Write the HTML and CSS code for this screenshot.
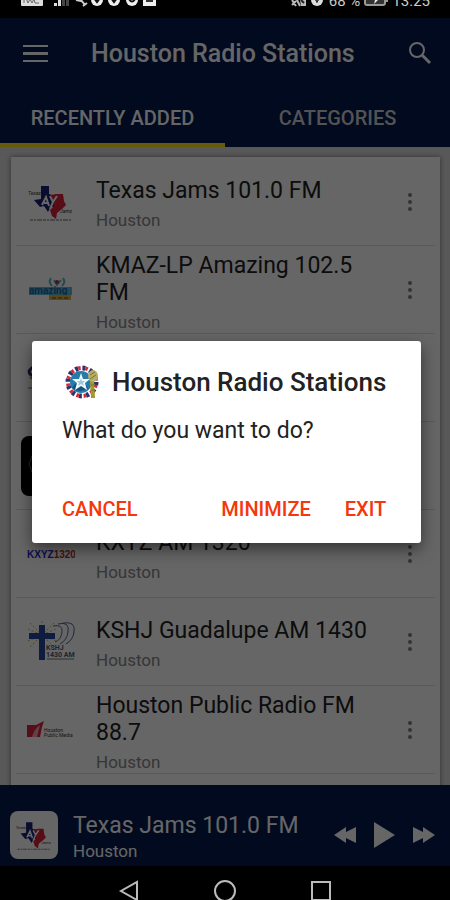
FILE: index.html
```html
<!DOCTYPE html>
<html lang="en">
<head>
<meta charset="utf-8">
<meta name="viewport" content="width=device-width, initial-scale=1">
<title>Houston Radio Stations</title>
<link rel="stylesheet" href="styles.css">
</head>
<body>
<svg class="defs" aria-hidden="true">
  <symbol id="texas" viewBox="0 0 48 48">
    <path d="M14 8h8v8l6 2v12l-4-2-3 6-4-6-4 1-6-7 7-1z" fill="#1b1f78"/>
    <path d="M24 17l5-1 7 0 1 7 2 4-4 4-5 4-1 6-4-3-2-6 4-4z" fill="#dc1f35"/>
    <path d="M15 27l4-8 3 9M17 25h5M23 18l3 6 4-6M26 24l-3 7" fill="none" stroke="#fff" stroke-width="2"/>
    <text x="1" y="17" class="tiny-logo">Texas</text>
    <text x="33" y="35" class="tiny-logo">Jams</text>
    <path d="M3 42h41" stroke="#666" stroke-width="1" stroke-dasharray="3 1 2 1 5 1"/>
  </symbol>
  <symbol id="more" viewBox="0 0 6 20">
    <circle cx="3" cy="3" r="2"/><circle cx="3" cy="10" r="2"/><circle cx="3" cy="17" r="2"/>
  </symbol>
</svg>

<div class="status">
  <div class="status-group">
    <svg width="136" height="16" viewBox="0 0 136 16">
      <path d="M0 0h22v14q0 1-1 1H1q-1 0-1-1z" fill="#ddd"/>
      <path d="M3 12V9l2-2 2 5 2-4 2 4 2-4 1 4h4" fill="none" stroke="#666" stroke-width="1"/>
      <path d="M33 12h3v3h-3zM37 8h3v7h-3z" fill="#ddd"/><path d="M41 4h3v11h-3zM45 0h3v15h-3z" fill="#444"/>
      <path d="M56 4l8 10M55 9l5 1M62 15l4-3" stroke="#ccc" stroke-width="2" fill="none"/>
      <circle cx="76" cy="9" r="6" fill="#eee"/><path d="M73 7l3 4 3-4" stroke="#111" stroke-width="2" fill="none"/>
      <circle cx="93" cy="9" r="6" fill="#eee"/><path d="M90 7l3 4 3-4" stroke="#111" stroke-width="2" fill="none"/>
      <circle cx="111" cy="9" r="6" fill="#eee"/><path d="M108 8q3 5 6 0" stroke="#111" stroke-width="2" fill="none"/>
      <path d="M122 2h13v13h-13z" fill="#eee"/><path d="M125 8h7v3h-7z" fill="#333"/>
    </svg>
  </div>
  <div class="status-group">
    <svg width="34" height="16" viewBox="0 0 34 16">
      <path d="M1 9l4 6M5 7l4 8M1 14l4-4" stroke="#bbb" stroke-width="2"/><path d="M8 3h7v12h-5z" fill="#bbb"/><path d="M10 9l3 3" stroke="#222" stroke-width="2"/>
      <circle cx="26" cy="9" r="6" fill="#ddd"/><path d="M24 8q2 5 4 0" stroke="#111" fill="none"/><path d="M26 6v6" stroke="#111"/>
    </svg>
    <span>68 %</span>
    <svg width="24" height="16" viewBox="0 0 24 16">
      <rect x="1" y="3" width="20" height="11" rx="2" fill="#333" stroke="#999" stroke-width="2"/><path d="M22 6h2v5h-2z" fill="#999"/><path d="M12 4l-5 5h4l-1 4 5-5h-4z" fill="#eee"/>
    </svg>
    <span>13.25</span>
  </div>
</div>

<div class="app">
  <header class="header">
    <div class="toolbar">
      <button class="icon-button" aria-label="Menu"><svg width="25" height="19" viewBox="0 0 25 19"><path d="M0 1h25v2H0zM0 8h25v3H0zM0 16h25v2H0z" fill="#fff"/></svg></button>
      <h1>Houston Radio Stations</h1>
      <button class="icon-button" aria-label="Search"><svg width="24" height="24" viewBox="0 0 24 24"><circle cx="9" cy="9" r="7" fill="none" stroke="#fff" stroke-width="2"/><path d="M14 14l8 8" stroke="#fff" stroke-width="3"/></svg></button>
    </div>
    <nav class="tabs">
      <a class="tab active" href="#recent">RECENTLY ADDED</a>
      <a class="tab" href="#categories">CATEGORIES</a>
    </nav>
  </header>

  <main class="content" id="recent">
    <ul class="card">
      <li class="station">
        <svg class="logo"><use href="#texas"/></svg>
        <div class="info"><h2>Texas Jams 101.0 FM</h2><p>Houston</p></div>
        <button class="more" aria-label="Options"><svg><use href="#more"/></svg></button>
      </li>
      <li class="station">
        <svg class="logo" viewBox="0 0 48 48">
          <path d="M24 12q-3 4 1 8M36 12q3 4-1 8M27 14l3 5 4-5" fill="none" stroke="#58b5cc" stroke-width="2"/><circle cx="30" cy="16" r="2" fill="#a3363c"/>
          <path d="M2 21h43v8H2z" fill="#5bb7dd"/>
          <text x="2" y="28" class="amazing">amazing</text>
          <path d="M22 29h22v5H22z" fill="#e3b030"/><path d="M25 32h16" stroke="#59451c" stroke-dasharray="4 2"/>
        </svg>
        <div class="info"><h2>KMAZ-LP Amazing 102.5 FM</h2><p>Houston</p></div>
        <button class="more" aria-label="Options"><svg><use href="#more"/></svg></button>
      </li>
      <li class="station">
        <svg class="logo" viewBox="0 0 48 48"><path d="M8 12q-8 4-5 8l5 3" fill="none" stroke="#243063" stroke-width="3"/><path d="M3 23l5 2" stroke="#a0a43c" stroke-width="3"/><path d="M1 34h20" stroke="#666"/></svg>
      </li>
      <li class="station">
        <svg class="logo large" viewBox="0 0 60 60"><rect width="60" height="60" rx="8"/><path d="M12 18l-4 10 4 10" fill="none" stroke="#666"/></svg>
      </li>
      <li class="station">
        <svg class="logo" viewBox="0 0 48 48"><text x="0" y="28" class="kxyz"><tspan fill="#2525c8">KXYZ</tspan><tspan fill="#a83232">1320</tspan></text></svg>
        <div class="info"><h2>KXYZ AM 1320</h2><p>Houston</p></div>
        <button class="more" aria-label="Options"><svg><use href="#more"/></svg></button>
      </li>
      <li class="station">
        <svg class="logo" viewBox="0 0 48 48">
          <path d="M3 5l24 24M27 5L3 29M15 3v28M1 11l28 12M1 23l28-12" stroke="#bab75c" stroke-dasharray="2 2"/>
          <path d="M12 7h6v35h-6zM2 15h26v6H2z" fill="#244a9e"/>
          <path d="M26 8q10-2 9 6-1 8-7 10M31 6q12-3 10 8-1 8-8 12M36 5q13-2 11 9-1 8-8 12" fill="none" stroke="#4f6797" stroke-width="1"/>
          <text x="19" y="32" class="kshj">KSHJ</text><text x="19" y="39" class="kshj">1430 AM</text><path d="M20 41h27" stroke="#777"/>
        </svg>
        <div class="info"><h2>KSHJ Guadalupe AM 1430</h2><p>Houston</p></div>
        <button class="more" aria-label="Options"><svg><use href="#more"/></svg></button>
      </li>
      <li class="station">
        <svg class="logo" viewBox="0 0 48 48"><path d="M0 19h9l8-4-2 6-2 10H0z" fill="#d82444"/><path d="M5 31q2-8 8-12l-3 12" fill="#f4a0ac"/><text x="17" y="26" class="public">Houston</text><text x="17" y="31" class="public">Public Media</text></svg>
        <div class="info"><h2>Houston Public Radio FM 88.7</h2><p>Houston</p></div>
        <button class="more" aria-label="Options"><svg><use href="#more"/></svg></button>
      </li>
      <li class="station"></li>
    </ul>
  </main>

  <footer class="player">
    <svg class="thumb"><use href="#texas"/></svg>
    <div class="playing"><h2>Texas Jams 101.0 FM</h2><p>Houston</p></div>
    <div class="controls">
      <button aria-label="Previous"><svg width="22" height="18" viewBox="0 0 22 18"><path d="M0 9l12-8v5l10-5v16l-10-5v5z"/></svg></button>
      <button aria-label="Play"><svg width="21" height="26" viewBox="0 0 21 26"><path d="M0 0l21 13L0 26z"/></svg></button>
      <button aria-label="Next"><svg width="22" height="18" viewBox="0 0 22 18"><path d="M22 9L10 1v5L0 1v16l10-5v5z"/></svg></button>
    </div>
  </footer>

  <div class="scrim">
    <section class="dialog" role="dialog" aria-modal="true" aria-labelledby="dialog-title">
      <div class="dialog-head">
        <svg width="34" height="34" viewBox="0 0 34 34">
          <circle cx="17" cy="17" r="14" fill="none" stroke="#27356e" stroke-width="5" stroke-dasharray="3 4.33"/>
          <circle cx="17" cy="17" r="14" fill="none" stroke="#dc2638" stroke-width="4" stroke-dasharray="2.5 4.83" stroke-dashoffset="-3"/>
          <circle cx="16" cy="17" r="11" fill="#267ba8"/><path d="M7 23q8 6 16 0l-3-4H10z" fill="#14517c"/>
          <path d="M16 8l2 6h7l-5 4 2 7-6-4-6 4 2-7-5-4h7z" fill="#f4fafc"/>
          <path d="M16 13l1 3h3l-2 2 1 3-3-2-3 2 1-3-2-2h3z" fill="#9cc9dd"/>
          <path d="M25 15h4l1 18h-4z" fill="#a49b2e"/><ellipse cx="28" cy="11" rx="5" ry="6" fill="#b7ad67"/><path d="M25 10l5-3M25 14l6-4M26 20h4M26 25h4" stroke="#777242"/>
        </svg>
        <h2 id="dialog-title">Houston Radio Stations</h2>
      </div>
      <p class="message">What do you want to do?</p>
      <div class="actions">
        <button class="cancel">CANCEL</button>
        <button>MINIMIZE</button>
        <button>EXIT</button>
      </div>
    </section>
  </div>
</div>

<nav class="system-nav" aria-label="System">
  <button aria-label="Back"><svg width="22" height="22" viewBox="0 0 22 22"><path d="M19 2v18L3 11z"/></svg></button>
  <button aria-label="Home"><svg width="22" height="22" viewBox="0 0 22 22"><circle cx="11" cy="11" r="10"/></svg></button>
  <button aria-label="Recent apps"><svg width="22" height="22" viewBox="0 0 22 22"><path d="M2 2h18v18H2z"/></svg></button>
</nav>
</body>
</html>
```
FILE: styles.css
```css
* { box-sizing: border-box; }
body {
  margin: 0;
  height: 100vh;
  display: flex;
  flex-direction: column;
  overflow: hidden;
  background: #000;
  font-family: Roboto, "Liberation Sans", sans-serif;
}
h1, h2, p, ul { margin: 0; padding: 0; font-weight: 400; }
button { border: 0; padding: 0; background: none; color: inherit; font: inherit; }
svg { display: block; flex: none; }
.defs { position: absolute; width: 0; height: 0; }

.status {
  flex: none;
  height: 18px;
  padding: 0 20px 11px 21px;
  display: flex;
  justify-content: space-between;
  align-items: flex-end;
  overflow: hidden;
  color: #ccc;
  font-size: 15px;
  line-height: 12px;
}
.status-group { display: flex; align-items: flex-end; gap: 4px; }

.app { position: relative; flex: 1; min-height: 0; display: flex; flex-direction: column; }
.header { flex: none; background: #03194e; color: #fff; }
.toolbar { display: flex; align-items: center; height: 70px; padding: 0 18px 0 23px; }
.toolbar h1 { flex: 1; padding: 2px 0 0 43px; font-size: 25px; font-weight: 500; line-height: 32px; }
.tabs { display: flex; height: 59px; }
.tab {
  flex: 1;
  display: flex;
  align-items: center;
  justify-content: center;
  border-bottom: 4px solid transparent;
  padding-top: 4px;
  color: #d0d0d0;
  font-size: 20px;
  font-weight: 500;
  text-decoration: none;
}
.tab.active { color: #fff; border-color: #ffe01c; }

.content { flex: 1; min-height: 0; overflow: hidden; padding: 10px 10px 0 11px; background: #dcdcdc; }
.card { padding-top: 1px; list-style: none; background: #fff; box-shadow: 0 0 5px rgba(0, 0, 0, .45); }
.station {
  display: flex;
  align-items: center;
  height: 88px;
  margin: 0 5px;
  padding-left: 11px;
  border-bottom: 1px solid #dedede;
}
.logo { width: 48px; height: 48px; }
.logo.large { width: 60px; height: 60px; margin-left: -6px; }
.info { flex: 1; padding: 4px 30px 0 21px; color: #222; }
h2 { font-size: 23px; line-height: 27px; }
.info p { margin-top: 6px; color: #888; font-size: 17px; line-height: 20px; }
.more { margin-right: 22px; }
.more svg { width: 6px; height: 20px; fill: #808080; }
.tiny-logo { font: italic 5px Roboto, sans-serif; fill: #333; }
.amazing { font: bold 10px Roboto, sans-serif; fill: #1c69a0; }
.kxyz { font: bold 10px "Liberation Sans", sans-serif; }
.kshj { font: bold 7px Roboto, sans-serif; fill: #4e5c77; }
.public { font: 5px Roboto, sans-serif; fill: #333; }

.player {
  flex: none;
  display: flex;
  align-items: center;
  height: 81px;
  padding: 18px 15px 0 10px;
  background: #03194e;
  color: #fff;
}
.thumb { width: 48px; height: 48px; padding: 5px; border-radius: 8px; background: #fff; }
.playing { flex: 1; padding: 6px 0 0 15px; }
.playing p { font-size: 17px; line-height: 24px; }
.controls { display: flex; align-items: center; gap: 18px; fill: #fff; }

.scrim {
  position: absolute;
  inset: 0;
  display: grid;
  align-items: center;
  padding: 0 32px;
  background: rgba(0, 0, 0, .6);
}
.dialog {
  padding: 24px 35px 23px 30px;
  border-radius: 3px;
  background: #fff;
  color: #222;
  box-shadow: 0 6px 16px rgba(0, 0, 0, .5);
}
.dialog-head { display: flex; align-items: center; gap: 13px; padding-left: 3px; }
.dialog-head h2 { font-size: 26px; font-weight: 500; line-height: 34px; white-space: nowrap; }
.message { margin-top: 18px; font-size: 23px; line-height: 28px; }
.actions { display: flex; gap: 34px; margin-top: 53px; color: #f5370c; font-size: 20px; font-weight: 500; line-height: 22px; }
.cancel { margin-right: auto; }

.system-nav {
  flex: none;
  display: flex;
  justify-content: center;
  align-items: flex-start;
  gap: 74px;
  height: 34px;
  padding-top: 14px;
  overflow: hidden;
}
.system-nav svg { fill: none; stroke: #bbb; stroke-width: 2; }
```
